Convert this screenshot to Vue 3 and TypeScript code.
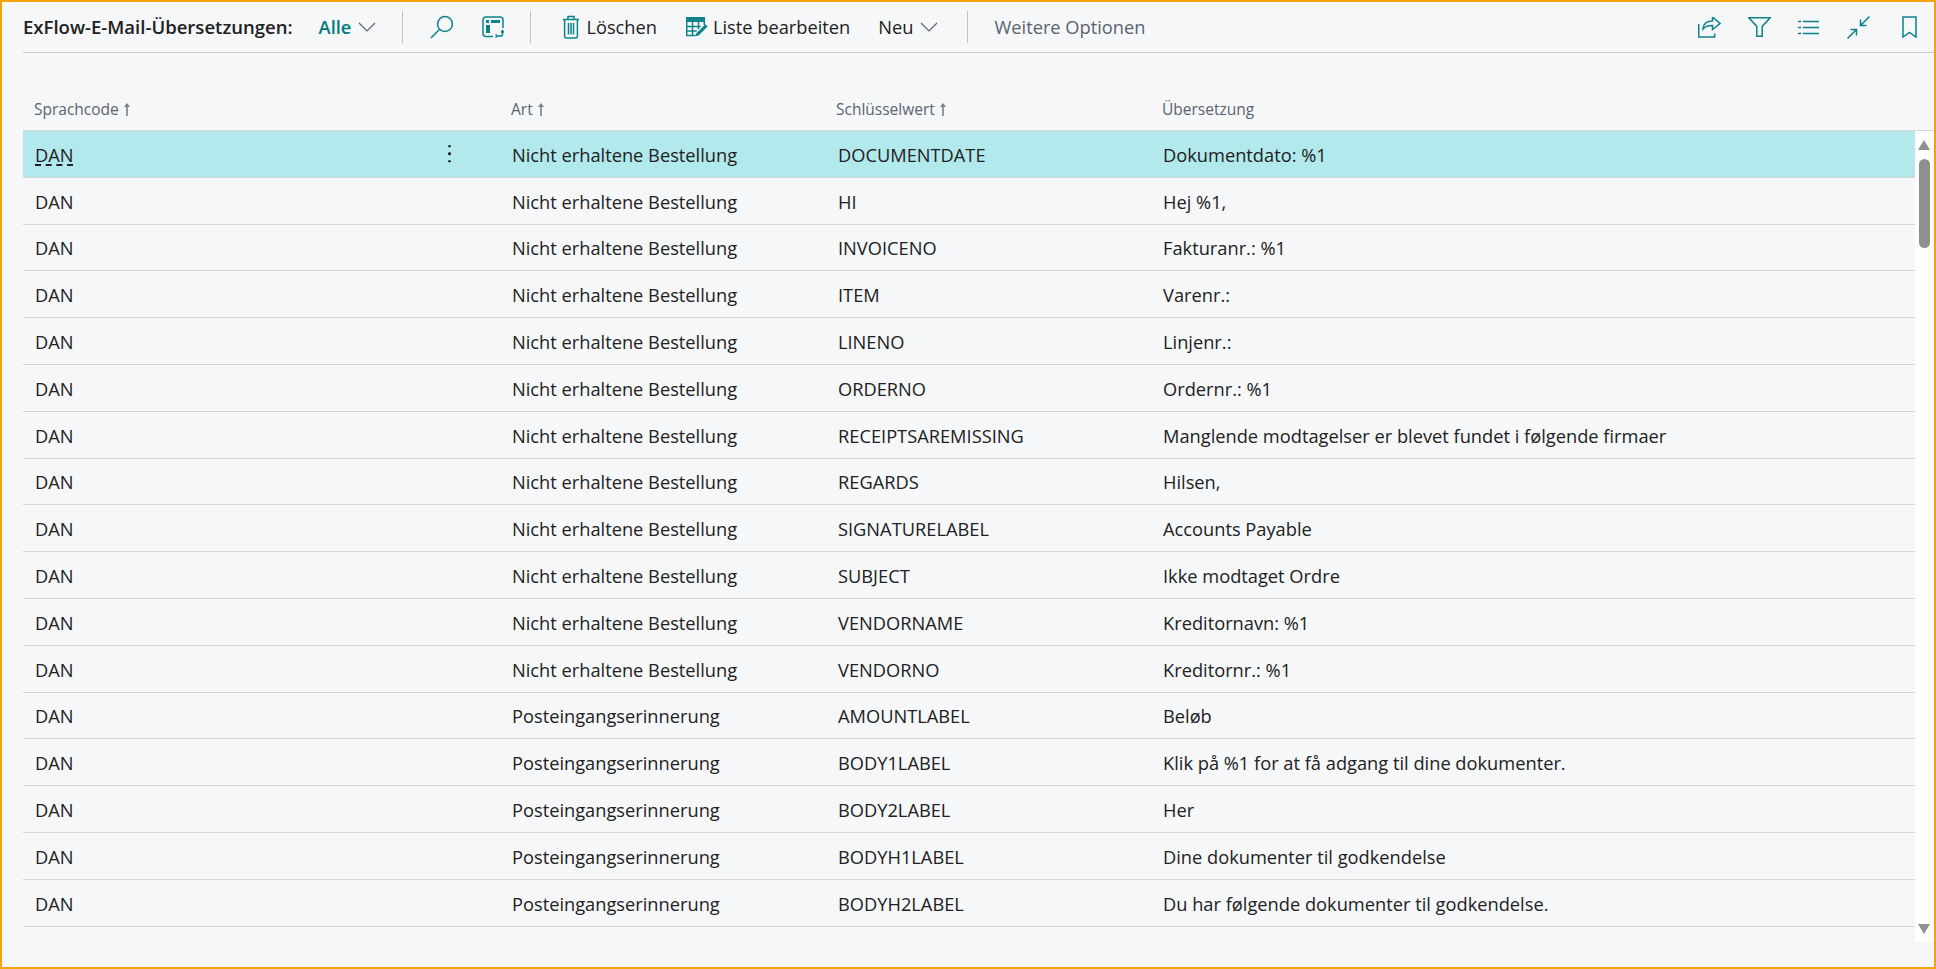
<script setup lang="ts">
interface Row {
  lang: string;
  kind: string;
  key: string;
  text: string;
}

const missing = "Nicht erhaltene Bestellung";
const reminder = "Posteingangserinnerung";

const rows: Row[] = [
  { lang: "DAN", kind: missing, key: "DOCUMENTDATE", text: "Dokumentdato: %1" },
  { lang: "DAN", kind: missing, key: "HI", text: "Hej %1," },
  { lang: "DAN", kind: missing, key: "INVOICENO", text: "Fakturanr.: %1" },
  { lang: "DAN", kind: missing, key: "ITEM", text: "Varenr.:" },
  { lang: "DAN", kind: missing, key: "LINENO", text: "Linjenr.:" },
  { lang: "DAN", kind: missing, key: "ORDERNO", text: "Ordernr.: %1" },
  { lang: "DAN", kind: missing, key: "RECEIPTSAREMISSING", text: "Manglende modtagelser er blevet fundet i følgende firmaer" },
  { lang: "DAN", kind: missing, key: "REGARDS", text: "Hilsen," },
  { lang: "DAN", kind: missing, key: "SIGNATURELABEL", text: "Accounts Payable" },
  { lang: "DAN", kind: missing, key: "SUBJECT", text: "Ikke modtaget Ordre" },
  { lang: "DAN", kind: missing, key: "VENDORNAME", text: "Kreditornavn: %1" },
  { lang: "DAN", kind: missing, key: "VENDORNO", text: "Kreditornr.: %1" },
  { lang: "DAN", kind: reminder, key: "AMOUNTLABEL", text: "Beløb" },
  { lang: "DAN", kind: reminder, key: "BODY1LABEL", text: "Klik på %1 for at få adgang til dine dokumenter." },
  { lang: "DAN", kind: reminder, key: "BODY2LABEL", text: "Her" },
  { lang: "DAN", kind: reminder, key: "BODYH1LABEL", text: "Dine dokumenter til godkendelse" },
  { lang: "DAN", kind: reminder, key: "BODYH2LABEL", text: "Du har følgende dokumenter til godkendelse." },
];

const columns = [
  { label: "Sprachcode", sorted: true },
  { label: "Art", sorted: true },
  { label: "Schlüsselwert", sorted: true },
  { label: "Übersetzung", sorted: false },
];
</script>

<template>
  <div class="page">
    <header class="toolbar">
      <span class="title">ExFlow-E-Mail-Übersetzungen:</span>
      <span class="view">Alle</span>
      <svg class="chev" width="18" height="10" viewBox="0 0 18 10"><path d="M1 1l8 8 8-8" /></svg>
      <i class="sep sep-a"></i>
      <svg class="ico search" width="24" height="24" viewBox="0 0 24 24">
        <circle cx="15" cy="9" r="7.4" />
        <path d="M9.6 14.2L1 23" />
      </svg>
      <svg class="ico layout" width="22" height="22" viewBox="0 0 22 22">
        <path d="M11 20.5H4a3 3 0 0 1-3-3V4a3 3 0 0 1 3-3h14a3 3 0 0 1 3 3v8" />
        <path class="solid" d="M4 4h3v3H4zM9 4h9v3H9zM4 9h4v8H4z" />
        <path d="M20.5 15v3.500a1.500 1.500 0 0 1-1.500 1.500h-4M13.500 18.500l1.800 1.500-1.800 1.500M19 16.500l1.500-1.800 1.500 1.800" />
      </svg>
      <i class="sep sep-b"></i>
      <button class="action trash-btn">
        <svg class="ico" width="18" height="24" viewBox="0 0 18 24">
          <path d="M1 4.500h16M6 4.500V1.500h6v3M2.600 4.500v17a1.500 1.500 0 0 0 1.500 1.500h9.800a1.500 1.500 0 0 0 1.500-1.500v-17M6.500 8v11.500M9 8v11.500M11.500 8v11.500" />
        </svg>
        <span>Löschen</span>
      </button>
      <button class="action edit-btn">
        <svg class="ico" width="22" height="21" viewBox="0 0 22 21">
          <path class="solid" d="M0 0h19v5H0z" />
          <path d="M.7 5v13.500h9M.7 9.500h14M.7 14h10M6.500 5v13.500M12.500 5v7M18.300 5v3" />
          <path class="solid" d="M19.400 7.200l2.200 2.200-9 9-2.900.8.700-3z" />
        </svg>
        <span>Liste bearbeiten</span>
      </button>
      <button class="action new-btn">
        <span>Neu</span>
        <svg class="chev" width="18" height="10" viewBox="0 0 18 10"><path d="M1 1l8 8 8-8" /></svg>
      </button>
      <i class="sep sep-c"></i>
      <span class="more">Weitere Optionen</span>

      <div class="tools">
        <svg class="ico" width="23" height="21" viewBox="0 0 23 21">
          <path d="M.7 7v13h16v-3.500" />
          <path d="M5 16c.3-5 3.500-8 9.500-8V4l7.500 6.500-7.500 6v-4c-4 0-7.500 1-9.500 3.500z" transform="translate(0 -4)" />
        </svg>
        <svg class="ico filter" width="23" height="20" viewBox="0 0 23 20">
          <path d="M.8.8h21.400l-8 8.600v9.800H8.800V9.400z" />
        </svg>
        <svg class="ico list" width="21" height="15" viewBox="0 0 21 15">
          <path d="M5 1.500h16M5 7.500h16M5 13.500h16M0 1.500h3M0 7.500h3M0 13.500h3" />
        </svg>
        <svg class="ico collapse" width="23" height="23" viewBox="0 0 23 23">
          <path d="M22.500.5l-9 9M13.500 3.500v6h6M.5 22.500l9-9M3.500 13.500h6v6" />
        </svg>
        <svg class="ico bookmark" width="15" height="22" viewBox="0 0 15 22">
          <path d="M1 1h13v20l-6.500-4.500L1 21z" />
        </svg>
      </div>
    </header>

    <div class="head">
      <div v-for="col in columns" :key="col.label" class="head-cell">
        {{ col.label }}
        <svg v-if="col.sorted" class="sort" width="8" height="13" viewBox="0 0 8 13">
          <path d="M4 13V3" />
          <path class="tip" d="M4 0l3 4H1z" />
        </svg>
      </div>
    </div>

    <div class="content">
      <div class="rows">
        <div v-for="(row, i) in rows" :key="row.key" class="row" :class="{ selected: i === 0 }">
          <div class="cell lang">
            <span :class="{ link: i === 0 }">{{ row.lang }}</span>
            <span v-if="i === 0" class="dots"><b></b><b></b><b></b></span>
          </div>
          <div class="cell">{{ row.kind }}</div>
          <div class="cell">{{ row.key }}</div>
          <div class="cell">{{ row.text }}</div>
        </div>
      </div>
      <div class="scrollbar">
        <i class="arrow up"></i>
        <i class="thumb"></i>
        <i class="arrow down"></i>
      </div>
    </div>
  </div>
</template>

<style scoped>
.page {
  box-sizing: border-box;
  width: 1936px;
  height: 969px;
  border: 2px solid #f5a30b;
  background: #f6f7f9;
  color: #212121;
  font-family: "Open Sans", "Noto Sans", sans-serif;
  font-size: 18.25px;
  overflow: hidden;
}

.toolbar {
  display: flex;
  align-items: center;
  height: 50px;
  margin-left: 21px;
  padding-right: 17px;
  border-bottom: 1px solid #c9cbd1;
}

.toolbar span {
  margin-top: -2px;
}

.title {
  font-size: 18.55px;
  font-weight: 600;
  white-space: nowrap;
}

.view {
  margin-left: 26px;
  color: #00797f;
  font-weight: 600;
}

.chev {
  margin-left: 7px;
  fill: none;
  stroke: #5f6670;
  stroke-width: 1.2;
}

.sep {
  width: 1px;
  height: 32px;
  background: #bfc2c7;
}

.sep-a {
  margin-left: 26px;
}

.sep-b {
  margin-left: 26px;
}

.sep-c {
  margin-left: 29px;
}

.ico {
  flex: none;
  fill: none;
  stroke: #0e828b;
  stroke-width: 1.5;
}

.ico .solid {
  fill: #0e828b;
  stroke: none;
}

.search {
  margin-left: 27px;
}

.layout {
  margin-left: 28px;
}

.action {
  display: flex;
  align-items: center;
  padding: 0;
  border: 0;
  background: none;
  color: inherit;
  font: inherit;
}

.trash-btn {
  margin-left: 31px;
  gap: 6px;
}

.edit-btn {
  margin-left: 29px;
  gap: 5px;
}

.new-btn {
  margin-left: 28px;
}

.more {
  margin-left: 26px;
  color: #5a6470;
}

.tools {
  display: flex;
  align-items: center;
  margin-left: auto;
}

.filter,
.list {
  margin-left: 27px;
}

.collapse {
  margin-left: 28px;
}

.bookmark {
  margin-left: 32px;
}

.head {
  display: grid;
  grid-template-columns: 477px 325px 326px 1fr;
  align-items: end;
  height: 77px;
  margin-left: 21px;
  padding-bottom: 10px;
  box-sizing: border-box;
  color: #5a6470;
  font-size: 15.5px;
}

.head-cell {
  display: flex;
  align-items: center;
  gap: 4px;
  padding-left: 11px;
}

.sort {
  fill: none;
  stroke: #7b8088;
  stroke-width: 1.6;
}

.sort .tip {
  fill: #7b8088;
  stroke: none;
}

.content {
  display: flex;
  margin-left: 21px;
  height: 811px;
  border-top: 1px solid #d5d5d8;
}

.rows {
  flex: 1;
  min-width: 0;
}

.row {
  display: grid;
  grid-template-columns: 477px 326px 325px 1fr;
  align-items: center;
  box-sizing: border-box;
  height: 46.8px;
  border-bottom: 1px solid #d5d6d9;
}

.row.selected {
  background: #b1e9ec;
}

.cell {
  padding: 1px 0 0 12px;
  white-space: nowrap;
}

.lang {
  position: relative;
}

.link {
  text-decoration: underline dashed;
  text-underline-offset: 3px;
}

.dots {
  position: absolute;
  left: 425px;
  top: 50%;
  transform: translateY(-50%);
  display: flex;
  flex-direction: column;
  gap: 5px;
}

.dots b {
  width: 2.5px;
  height: 2.5px;
  border-radius: 50%;
  background: #212121;
}

.scrollbar {
  position: relative;
  width: 19px;
  background: #fff;
}

.thumb {
  position: absolute;
  left: 4px;
  top: 28px;
  width: 11px;
  height: 89px;
  border-radius: 6px;
  background: #8f8f8f;
}

.arrow {
  position: absolute;
  left: 3px;
  width: 0;
  height: 0;
  border-left: 6.500px solid transparent;
  border-right: 6.500px solid transparent;
}

.arrow.up {
  top: 9px;
  border-bottom: 10px solid #8f8f8f;
}

.arrow.down {
  bottom: 8px;
  border-top: 10px solid #8f8f8f;
}
</style>
